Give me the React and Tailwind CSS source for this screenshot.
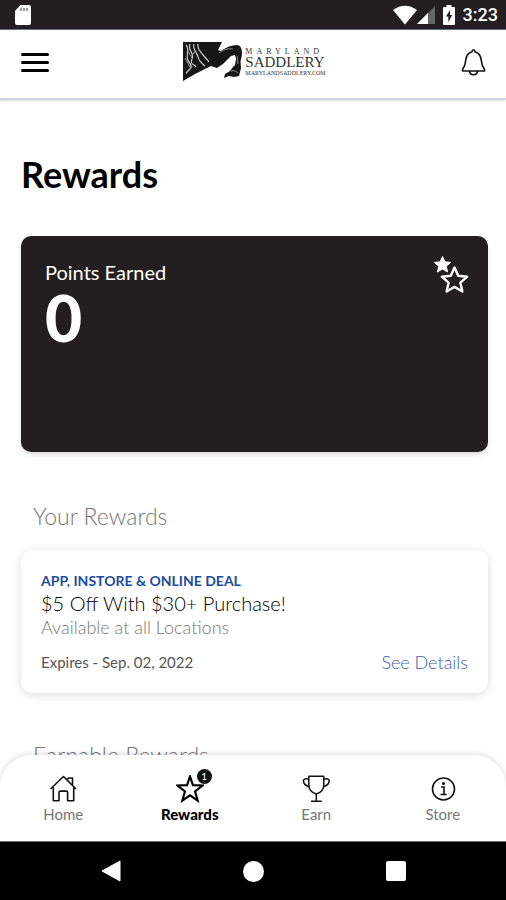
import React, { useState } from "react";

const STAR = "M12 1.2l2.500 7.500 8.300.3-6.500 5 2.300 8-6.600-4.600-6.600 4.600 2.300-8-6.500-5 8.300-.3z";

const HomeIcon = () => (
  <svg className="w-7 h-7" viewBox="0 0 28 28" fill="none" stroke="#111" strokeWidth="1.6" strokeLinejoin="round">
    <path d="M1.5 14L14.500 1.500l12.500 12.500M4.300 12.500v13.300h5.700v-8.400q0-1.300 1.300-1.300h6q1.300 0 1.300 1.300v8.400h6.100V12.500" />
    <path d="M18.500 4.500l1-1.500h4v7" />
  </svg>
);

const StarIcon = () => (
  <svg className="w-7 h-7" viewBox="0 0 24 24" fill="none" stroke="#000" strokeWidth="1.8">
    <path d={STAR} />
  </svg>
);

const TrophyIcon = () => (
  <svg className="w-7 h-7" viewBox="0 0 28 28" fill="none" stroke="#111" strokeWidth="1.5" strokeLinejoin="round">
    <path d="M6.800 1.200h15v8.600c0 4.600-3.300 8-7.500 9.200-4.200-1.200-7.500-4.600-7.500-9.200z" />
    <path d="M6.800 4.200C4.500 3.600 2 4 1.500 5.200c-.3 3 2.200 5.500 5.700 6.500M21.800 4.200c2.300-.6 4.800-.2 5.300 1 .3 3-2.200 5.500-5.700 6.500M14.300 19v6.500M9 26.300h10.800" />
  </svg>
);

const InfoIcon = () => (
  <svg className="w-7 h-7" viewBox="0 0 28 28" fill="none" stroke="#111" strokeWidth="1.6">
    <circle cx="14.500" cy="14" r="11" />
    <path d="M12 12h3v7.500M11.500 19.500h6.200" />
    <circle cx="14.500" cy="8.500" r="1.500" fill="#111" stroke="none" />
  </svg>
);

const tabs = [
  { name: "Home", Icon: HomeIcon },
  { name: "Rewards", Icon: StarIcon, badge: 1 },
  { name: "Earn", Icon: TrophyIcon },
  { name: "Store", Icon: InfoIcon },
];

const StatusBar = () => (
  <div className="flex items-center justify-between h-[30px] pl-3.5 pr-2 bg-[#231f20] border-b border-gray-500 text-white">
    <svg className="w-[18px] h-5" viewBox="0 0 18 20">
      <path d="M6.500 0H15q2 0 2 2v16q0 2-2 2H3q-2 0-2-2V6z" fill="#fff" />
      <path d="M7 3v3M10 3v3M13 3v3" stroke="#777" strokeWidth="1.500" />
    </svg>
    <div className="flex items-center">
      <svg className="w-6 h-5" viewBox="0 0 24 20">
        <path d="M0 5Q12-3.500 24 5L12 19.500z" fill="#fff" />
      </svg>
      <svg className="w-[18px] h-5" viewBox="0 0 18 20">
        <path d="M18 1v18H0z" fill="#666" />
        <path d="M11 8v11H0z" fill="#fff" />
      </svg>
      <svg className="w-3 h-5 ml-2" viewBox="0 0 12 20">
        <path d="M3.500 0h5v2H11q1 0 1 1v16q0 1-1 1H1q-1 0-1-1V3q0-1 1-1h2.500z" fill="#fff" />
        <path d="M7 5L3 11.500h2.300V17l4-7H7z" fill="#231f20" />
      </svg>
      <span className="ml-2 font-[Roboto,sans-serif] font-medium text-lg leading-5">3:23</span>
    </div>
  </div>
);

const Logo = () => (
  <a href="#home" aria-label="Maryland Saddlery" className="flex items-center gap-[3px] text-[#333]">
    <svg className="w-[59px] h-10" viewBox="0 0 59 40">
      <path
        d="M0 0h39l-4 8 3 1c5-4 11-6 16-6 3 0 5 3 5 8 0 4-1 5-1.500 9l.5 6-2 8-5 1-5-1-5 2 1-4 5-3 3-4 2-2 1-6-1-4-4 1-8 8-6 4-6-2-4 2-8 4-4 2-12 7z"
        fill="#161616"
      />
      <path
        d="M3 3c5 6-2 11 3 17s0 7-3 11M7 2c-3 6 5 9 2 15s3 5 4 8M11 2c-2 5 3 8 4 13s4 6 7 9M15 2c-1 6 4 9 11 18"
        fill="none"
        stroke="#ccc"
        strokeWidth="1.200"
      />
      <path d="M5 9l4 7M2 16l5 9M12 9l-3 5M9 25l-6 7" stroke="#999" strokeWidth="1" />
      <path d="M36 11c4-3 8-5 14-4M54 14l1 8M48 29c3-1 5 0 7 2" fill="none" stroke="#888" strokeWidth="1" />
    </svg>
    <span className="flex flex-col font-['Liberation_Serif',serif]">
      <span className="text-[8px] leading-[9px] tracking-[4px] -mr-1">MARYLAND</span>
      <span className="text-[15px] leading-[13px]">SADDLERY</span>
      <span className="text-[6px] leading-[8px]">MARYLANDSADDLERY.COM</span>
    </span>
  </a>
);

const Header = () => (
  <header className="relative flex items-center justify-between h-[70px] pl-[21px] pr-[18px] pb-1 bg-white border-b-2 border-gray-300 shadow-sm">
    <button aria-label="Menu" className="flex flex-col gap-[5px] w-7">
      <span className="h-[3px] w-full rounded-sm bg-black" />
      <span className="h-[3px] w-full rounded-sm bg-black" />
      <span className="h-[3px] w-full rounded-sm bg-black" />
    </button>
    <Logo />
    <button aria-label="Notifications">
      <svg className="w-7 h-7" viewBox="0 0 28 28" fill="none" stroke="#111" strokeWidth="1.600" strokeLinejoin="round">
        <path d="M12 3.800Q12.200 1.800 13.500 1.800t1.500 2c4 1 5.800 4 6.300 8.700.3 4 .9 6 3.200 9v1.500H2.500v-1.500c2.300-3 2.900-5 3.200-9 .5-4.700 2.300-7.700 6.300-8.700z" />
        <path d="M9.500 23c.3 5 7.700 5 8 0" />
      </svg>
    </button>
  </header>
);

const PointsCard = () => (
  <section className="relative mt-[42px] min-h-54 rounded-[10px] bg-[#231f20] px-6 py-[22px] text-white shadow-md">
    <h2 className="text-xl leading-7">Points Earned</h2>
    <p className="text-[64px] leading-16 font-black">0</p>
    <svg className="absolute top-[19px] right-[19px] w-9 h-10" viewBox="0 0 36 40">
      <path
        d="M9.500 1.500l2.400 5.300 5.800.6-4.400 3.900 1.300 5.700-5.100-3-5.100 3 1.300-5.700-4.400-3.900 5.800-.6z"
        fill="#fff"
        stroke="#fff"
        strokeLinejoin="round"
      />
      <path
        d="M21.500 12.500l3.700 8.300 9 .9-6.800 6 2 8.800-7.900-4.600-7.900 4.600 2-8.800-6.800-6 9-.9z"
        fill="#231f20"
        stroke="#fff"
        strokeWidth="2.400"
        strokeLinejoin="round"
      />
    </svg>
  </section>
);

const RewardCard = () => (
  <article className="mt-4.5 rounded-xl bg-white px-5 pt-5 pb-[19px] shadow-[0_2px_10px_rgba(0,0,0,0.14)]">
    <p className="text-sm leading-[22px] font-bold text-[#1c4ba0]">APP, INSTORE &amp; ONLINE DEAL</p>
    <h3 className="text-xl leading-[22px] font-light text-black">$5 Off With $30+ Purchase!</h3>
    <p className="text-lg leading-[26px] font-light text-[#777]">Available at all Locations</p>
    <div className="mt-2.5 flex items-center justify-between">
      <span className="text-[15px] leading-6 text-[#555]">Expires - Sep. 02, 2022</span>
      <a href="#details" className="text-lg leading-6 font-light text-[#3c5cb5]">
        See Details
      </a>
    </div>
  </article>
);

const TabBar = () => {
  const [active, setActive] = useState("Rewards");

  return (
    <nav className="relative -mt-8 grid grid-cols-4 rounded-t-[32px] bg-white pt-5 pb-4 shadow-[0_-1px_6px_rgba(0,0,0,0.14)]">
      {tabs.map(({ name, Icon, badge }) => (
        <button key={name} onClick={() => setActive(name)} className="flex flex-col items-center">
          <span className="relative">
            <Icon />
            {badge && (
              <span className="absolute -top-1.5 -right-2 w-[15px] h-[15px] rounded-full bg-[#111] text-white text-[10px] leading-[15px]">
                {badge}
              </span>
            )}
          </span>
          <span
            className={`text-[15px] leading-[22px] ${
              active === name ? "font-black text-black" : "text-[#777]"
            }`}
          >
            {name}
          </span>
        </button>
      ))}
    </nav>
  );
};

const SystemBar = () => (
  <div className="relative flex items-center justify-center gap-[122px] h-[59px] bg-black border-t border-gray-500">
    <button aria-label="Back">
      <svg className="w-5 h-[22px]" viewBox="0 0 20 22">
        <path d="M19 1v20L1 11z" fill="#fff" stroke="#fff" strokeLinejoin="round" />
      </svg>
    </button>
    <button aria-label="Home screen" className="w-[21px] h-[21px] rounded-full bg-white" />
    <button aria-label="Recent apps" className="w-5 h-5 rounded-xs bg-white" />
  </div>
);

export default function App() {
  return (
    <div className="flex h-screen flex-col overflow-hidden bg-white font-[Lato,sans-serif]">
      <StatusBar />
      <Header />
      <main className="min-h-0 flex-1 overflow-hidden pl-[21px] pr-[18px] pt-[54px]">
        <h1 className="text-4xl leading-10 font-bold text-black">Rewards</h1>
        <PointsCard />
        <h2 className="mt-12 px-3 text-[23px] leading-8 font-light text-[#777]">Your Rewards</h2>
        <RewardCard />
        <h2 className="mt-[46px] px-3 text-[23px] leading-8 font-light text-[#777]">Earnable Rewards</h2>
      </main>
      <TabBar />
      <SystemBar />
    </div>
  );
}
